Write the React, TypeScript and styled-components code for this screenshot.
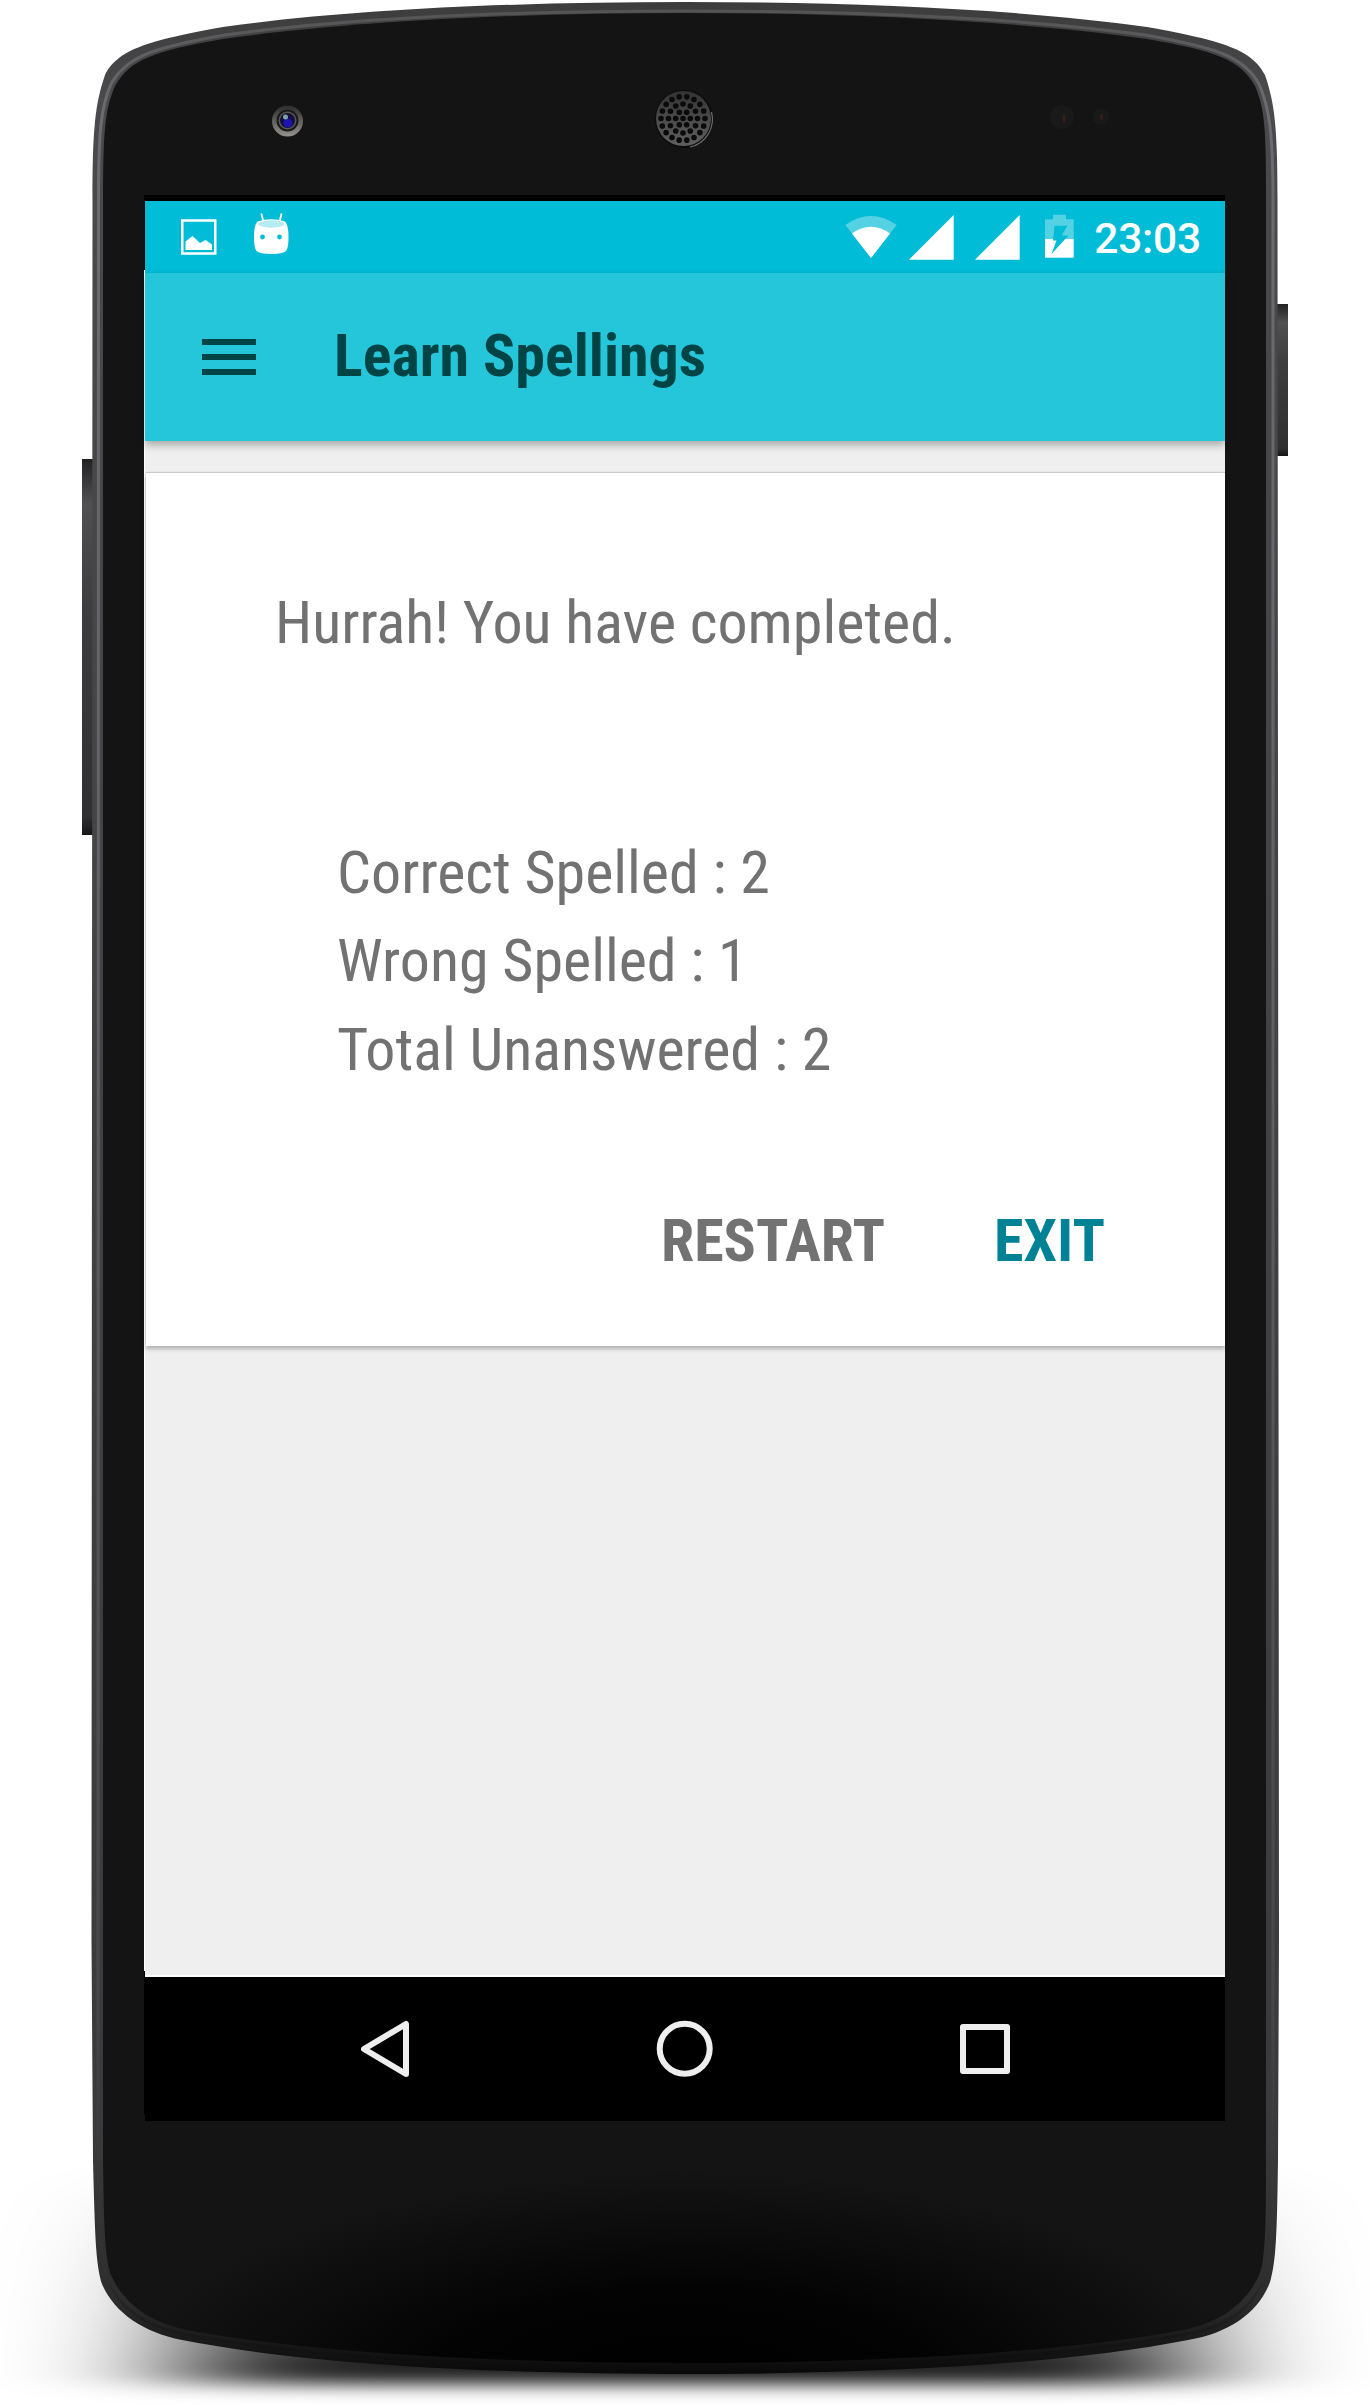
import React from "react";
import styled, { createGlobalStyle } from "styled-components";

const GlobalStyle = createGlobalStyle`
  *, *::before, *::after { box-sizing: border-box; }
  body { margin: 0; background: #fff; font-family: Roboto, "Open Sans", sans-serif; }
`;

const Device = styled.main`
  position: relative;
  width: 1370px;
  height: 2405px;
  padding: 195px 145px 0;
  overflow: hidden;
`;

const Chassis = styled.svg`
  position: absolute;
  inset: 0;
`;

const Screen = styled.section`
  position: relative;
  display: flex;
  flex-direction: column;
  width: 1080px;
  height: 1926px;
  border-top: 6px solid #000;
  background: #efefef;
`;

const StatusBar = styled.header`
  display: flex;
  justify-content: space-between;
  height: 72px;
  background: #00bcd6;
  color: #fff;
`;

const Time = styled.span`
  padding: 13px 24px 0 0;
  font-size: 42.5px;
  font-weight: 500;
  line-height: 50px;
  letter-spacing: -0.2px;
`;

const StatusRight = styled.div`
  display: flex;
  gap: 19px;
`;

const AppBar = styled.div`
  display: flex;
  align-items: center;
  gap: 78px;
  height: 168px;
  padding-left: 57px;
  background: #26c6da;
  box-shadow: 0 4px 8px rgba(0, 0, 0, 0.3);
  z-index: 1;
`;

const MenuButton = styled.button`
  display: flex;
  flex-direction: column;
  gap: 9px;
  width: 54px;
  padding: 0;
  border: 0;
  background: none;
`;

const MenuLine = styled.span`
  height: 6px;
  background: #004446;
`;

const Condensed = styled.span<{ $bold?: boolean }>`
  font-family: "Roboto Condensed", Roboto, sans-serif;
  font-stretch: 75%;
  font-size: 60px;
  line-height: 70px;
  white-space: nowrap;
  font-weight: ${(p) => (p.$bold ? 700 : 400)};
`;

const Title = styled(Condensed)`
  padding-bottom: 2px;
  color: #004446;
`;

const Card = styled.article`
  display: flex;
  flex-direction: column;
  height: 873px;
  margin: 32px 0 0 1px;
  padding: 115px 120px 0 129px;
  background: #fff;
  box-shadow: 0 3px 4px rgba(0, 0, 0, 0.26), 0 -1px 1px rgba(0, 0, 0, 0.14);
  color: #727272;
`;

const Scores = styled.div`
  display: flex;
  flex-direction: column;
  gap: 18px;
  padding: 180px 0 0 62px;
`;

const Total = styled(Condensed)`
  padding-top: 1px;
`;

const Actions = styled.div`
  display: flex;
  justify-content: flex-end;
  gap: 109px;
  margin-top: 121px;
`;

const Action = styled(Condensed).attrs({ as: "button" })<{ $color: string }>`
  padding: 0;
  border: 0;
  background: none;
  color: ${(p) => p.$color};
`;

const NavBar = styled.nav`
  display: flex;
  justify-content: center;
  align-items: center;
  height: 146px;
  margin-top: auto;
  background: #000;
  border-top: 2px solid #fff;
`;

function PhoneBody() {
  const holes: [number, number][] = [[0, 0]];
  [[6, 7.3], [12, 14.5], [18, 22]].forEach(([n, r]) => {
    for (let i = 0; i < n; i++) {
      const a = (i / n) * Math.PI * 2;
      holes.push([Math.cos(a) * r, Math.sin(a) * r]);
    }
  });
  return (
    <Chassis width="1370" height="2405" viewBox="0 0 1370 2405">
      <defs>
        <linearGradient id="rim" x1="0" x2="0" y1="0" y2="1">
          <stop offset="0" stopColor="#3c3c3c" />
          <stop offset="0.04" stopColor="#4a4a4d" />
          <stop offset="0.5" stopColor="#414144" />
          <stop offset="0.9" stopColor="#3a3a3c" />
          <stop offset="0.97" stopColor="#2c2c2c" />
          <stop offset="1" stopColor="#090909" />
        </linearGradient>
        <linearGradient id="shine" x1="0" x2="0" y1="0" y2="1">
          <stop offset="0" stopColor="#545456" />
          <stop offset="0.04" stopColor="#6c6c70" />
          <stop offset="0.4" stopColor="#626266" />
          <stop offset="0.85" stopColor="#464648" />
          <stop offset="0.96" stopColor="#303030" />
          <stop offset="1" stopColor="#0c0c0c" />
        </linearGradient>
        <radialGradient id="floor" gradientUnits="userSpaceOnUse" cx="0" cy="0" r="1" gradientTransform="translate(685 2385) scale(570 215)">
          <stop offset="0" stopColor="#000" />
          <stop offset="0.45" stopColor="#030303" />
          <stop offset="1" stopColor="#141414" />
        </radialGradient>
        <linearGradient id="key" x1="0" x2="0" y1="0" y2="1">
          <stop offset="0" stopColor="#222" />
          <stop offset="0.12" stopColor="#505050" />
          <stop offset="0.4" stopColor="#3d3d3d" />
          <stop offset="0.95" stopColor="#303030" />
          <stop offset="1" stopColor="#161616" />
        </linearGradient>
        <linearGradient id="fall" x1="0" x2="0" y1="0" y2="1">
          <stop offset="0" stopColor="#000" stopOpacity="0" />
          <stop offset="0.8" stopColor="#000" stopOpacity="0.75" />
          <stop offset="1" stopColor="#000" stopOpacity="0.95" />
        </linearGradient>
        <linearGradient id="ring" x1="0" x2="0" y1="0" y2="1">
          <stop offset="0" stopColor="#2c2c2c" />
          <stop offset="1" stopColor="#94928f" />
        </linearGradient>
        <linearGradient id="mesh" x1="0" x2="0" y1="0" y2="1">
          <stop offset="0" stopColor="#333" />
          <stop offset="1" stopColor="#606060" />
        </linearGradient>
        <filter id="soft" filterUnits="userSpaceOnUse" x="-300" y="2000" width="1970" height="500">
          <feGaussianBlur stdDeviation="84 9" />
        </filter>
      </defs>
      <rect x="185" y="2165" width="1000" height="219" fill="url(#fall)" filter="url(#soft)" />
      <rect x="82" y="459" width="14" height="376" fill="url(#key)" />
      <rect x="1274" y="304" width="14" height="152" fill="url(#key)" />
      <path
        fill="url(#rim)"
        d="M92.500 200C92.500 130 95 104 105 75C118 50 145 41 223 27C350 9 520 2 685 2C850 2 1020 9 1147 27C1225 41 1252 50 1265 75C1275 104 1277.500 130 1277.500 200L1279 1940L1278 2160C1277 2235 1276 2262 1270 2282C1259 2312 1230 2333 1188 2340C1050 2367 850 2374 685 2374C520 2374 320 2367 182 2340C142 2332 114 2312 102 2284C96 2264 95 2240 93 2160L91.500 1940Z"
      />
      <path
        fill="none"
        stroke="url(#shine)"
        strokeWidth="3"
        d="M98.500 200C98.500 130 101 107 111 84C127 57 150 48 225 35C350 18 520 11 685 11C850 11 1020 18 1145 35C1220 48 1243 57 1259 84C1269 107 1273 130 1273 200V2160C1273 2235 1271 2260 1265 2278C1252 2308 1228 2327 1186 2334C1050 2360 850 2367 685 2367C520 2367 320 2360 184 2334C144 2326 120 2308 107 2279C101 2260 99 2235 98 2160Z"
      />
      <path
        fill="url(#floor)"
        d="M103 200C103 130 105 109 115 86C130 59 155 51 223 39C350 21 520 13 685 13C850 13 1020 21 1147 39C1215 51 1240 59 1255 86C1265 109 1266 130 1266 200V2160C1266 2232 1265 2255 1260 2273C1247 2303 1222 2322 1183 2330C1050 2355 850 2363 685 2363C520 2363 320 2355 187 2330C148 2322 123 2303 110 2273C105 2255 104 2232 103 2160Z"
      />
      <circle cx="287.500" cy="121" r="15.500" fill="url(#ring)" />
      <circle cx="287.500" cy="120.500" r="11" fill="#1c1a19" />
      <circle cx="287.500" cy="120.500" r="9" fill="#5a5755" />
      <circle cx="287.500" cy="120.500" r="7.500" fill="#15103a" />
      <circle cx="288" cy="123" r="4.500" fill="#1a14b0" />
      <circle cx="285.500" cy="117" r="2.500" fill="#7fa3a8" />
      <circle cx="684" cy="119" r="29" fill="#0b0b0b" />
      <path d="M690 147A28.500 28.500 0 0 0 711.500 112" fill="none" stroke="#6c6c6c" strokeWidth="1.200" />
      <circle cx="683.500" cy="118.500" r="27.500" fill="url(#mesh)" />
      {holes.map(([x, y], i) => (
        <circle key={i} cx={683 + x} cy={118.5 + y} r="2.800" fill="#0a0a0a" />
      ))}
      <circle cx="1062" cy="117" r="12" fill="#1a1919" />
      <circle cx="1101" cy="117" r="8" fill="#1a1919" />
      <ellipse cx="1064" cy="118.500" rx="1.500" ry="4" fill="#33201a" />
      <ellipse cx="1101.500" cy="117" rx="1.500" ry="3" fill="#33201a" />
      <rect x="144" y="195" width="1080" height="75" fill="#000" />
      <rect x="144" y="270" width="2" height="1701" fill="#fff" />
      <rect x="144" y="1971" width="2" height="144" fill="#000" />
    </Chassis>
  );
}

const NotificationIcons = () => (
  <svg width="160" height="72" viewBox="145 201 160 72" fill="#fff">
    <rect x="182.250" y="220.500" width="33" height="33" fill="none" stroke="#fff" strokeWidth="2.500" />
    <path d="M185.500 241.500L192.500 236L200 243L205.500 240L212 244.500V250H185.500Z" />
    <path d="M261.300 213.500L263.800 223M281.600 213.500L279.200 223" stroke="#fff" strokeWidth="1.800" />
    <path d="M257.500 221.500Q271 217 285 221.500Q288.500 225 288.500 237Q288.500 248 286 251Q283 254 271.300 254Q259.500 254 256.500 251Q254 248 254 237Q254 225 257.500 221.500Z" />
    <ellipse cx="271.300" cy="224" rx="13" ry="3.700" fill="#b5ebf3" />
    <circle cx="262.500" cy="237" r="2.400" fill="#00bcd6" />
    <circle cx="279.500" cy="237" r="2.400" fill="#00bcd6" />
  </svg>
);

const SystemIcons = () => (
  <svg width="230" height="72" viewBox="845 201 230 72" fill="#fff">
    <path d="M871 258L845.300 225Q871 207 896.700 225Z" opacity="0.33" />
    <path d="M871 258L852 233.500Q871 220 890 233.500Z" />
    <path d="M909 259.700L953.700 215V259.700ZM975 259.700L1019.700 215V259.700Z" />
    <path d="M1045 219.300H1053V214.700H1066V219.300H1073.700V239H1045Z" opacity="0.33" />
    <path d="M1045 239H1073.700V257.700H1045Z" />
    <path d="M1054.500 225.700H1067.500L1061.500 235.500H1068.500L1051.500 254L1056.500 240.500H1053Z" fill="#00bcd6" />
  </svg>
);

const NavIcons = () => (
  <svg width="1080" height="144" viewBox="145 1977 1080 144" fill="none" stroke="#eee" strokeWidth="6" strokeLinejoin="round">
    <path d="M364 2049L406 2024V2074Z" />
    <circle cx="684.700" cy="2048.800" r="25" />
    <rect x="963" y="2027" width="44" height="44" />
  </svg>
);

export default function App() {
  return (
    <>
      <GlobalStyle />
      <Device>
        <PhoneBody />
        <Screen>
          <StatusBar>
            <NotificationIcons />
            <StatusRight>
              <SystemIcons />
              <Time>23:03</Time>
            </StatusRight>
          </StatusBar>
          <AppBar>
            <MenuButton aria-label="Menu">
              <MenuLine />
              <MenuLine />
              <MenuLine />
            </MenuButton>
            <Title $bold>Learn Spellings</Title>
          </AppBar>
          <Card>
            <Condensed>Hurrah! You have completed.</Condensed>
            <Scores>
              <Condensed>Correct Spelled : 2</Condensed>
              <Condensed>Wrong Spelled : 1</Condensed>
              <Total>Total Unanswered : 2</Total>
            </Scores>
            <Actions>
              <Action $bold $color="#727272">RESTART</Action>
              <Action $bold $color="#008296">EXIT</Action>
            </Actions>
          </Card>
          <NavBar>
            <NavIcons />
          </NavBar>
        </Screen>
      </Device>
    </>
  );
}
